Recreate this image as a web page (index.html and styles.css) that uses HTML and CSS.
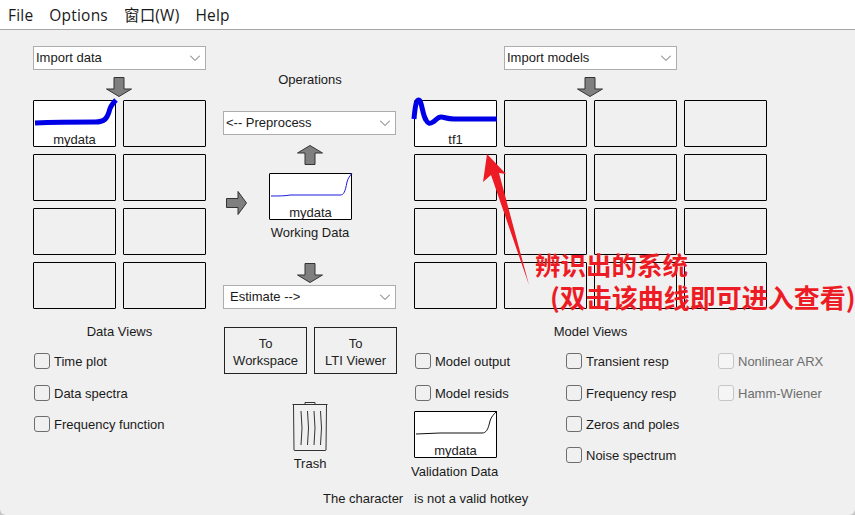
FILE: index.html
```html
<!DOCTYPE html>
<html lang="en">
<head>
  <meta charset="UTF-8">
  <title>System Identification</title>
  <link rel="stylesheet" href="styles.css">
</head>
<body>
  <div class="window">
    <div class="menubar">
      <span>File</span>
      <span>Options</span>
      <span>窗口(W)</span>
      <span>Help</span>
    </div>

    <div class="main">
      <!-- data side -->
      <div class="col-data">
        <div class="select"><span>Import data</span><svg class="chev" viewBox="0 0 10 6"><path d="M0 0.5 L5 5.5 L10 0.5"/></svg></div>
        <svg class="arrow arrow-in" viewBox="0 0 26 20"><path d="M8 0.5 H18 V12 H25.5 L13 19.5 L0.5 12 H8 Z"/></svg>
        <div class="tiles tiles-2">
          <div class="tile filled">
            <svg class="curve" viewBox="0 0 83 47"><path class="thick" d="M2 23 C25 22 40 22 62 22 C72 22 74 18 76 12 C77 6 80 3 83 0"/></svg>
            <span>mydata</span>
          </div>
          <div class="tile"></div>
          <div class="tile"></div><div class="tile"></div>
          <div class="tile"></div><div class="tile"></div>
          <div class="tile"></div><div class="tile"></div>
        </div>
        <div class="view-title">Data Views</div>
        <div class="checks">
          <label class="check"><input type="checkbox">Time plot</label>
          <label class="check"><input type="checkbox">Data spectra</label>
          <label class="check"><input type="checkbox">Frequency function</label>
        </div>
      </div>

      <!-- operations -->
      <div class="col-ops">
        <div class="ops-title">Operations</div>
        <div class="select"><span>&lt;-- Preprocess</span><svg class="chev" viewBox="0 0 10 6"><path d="M0 0.5 L5 5.5 L10 0.5"/></svg></div>
        <svg class="arrow arrow-up" viewBox="0 0 26 20"><path d="M8 19.5 H18 V8 H25.5 L13 0.5 L0.5 8 H8 Z"/></svg>
        <div class="work-row">
          <svg class="arrow arrow-right" viewBox="0 0 21 24"><path d="M0.5 7.5 H12 V0.5 L20.5 12 L12 23.5 V16.5 H0.5 Z"/></svg>
          <div class="tile filled">
            <svg class="curve" viewBox="0 0 83 47"><path class="thin" d="M2 23 C10 23 16 23 21 22 L71 22 C75 22 76 19 78 9 C79 5 81 3 83 0"/></svg>
            <span>mydata</span>
          </div>
        </div>
        <div class="work-label">Working Data</div>
        <svg class="arrow arrow-down" viewBox="0 0 26 20"><path d="M8 0.5 H18 V12 H25.5 L13 19.5 L0.5 12 H8 Z"/></svg>
        <div class="select select-estimate"><span>Estimate --&gt;</span><svg class="chev" viewBox="0 0 10 6"><path d="M0 0.5 L5 5.5 L10 0.5"/></svg></div>
        <div class="buttons">
          <button>To<br>Workspace</button>
          <button>To<br>LTI Viewer</button>
        </div>
        <svg class="trash" viewBox="0 0 36 49">
          <path d="M13 2.5 V0.5 H23 V2.5"/>
          <path d="M0.5 2.5 H35.5"/>
          <path d="M1.5 2.5 L2 48 Q2 48.5 3 48.5 H33 Q34 48.5 34 48 L34.5 2.5"/>
          <path d="M9 9 Q11 26 9 43 M15.5 9 Q17.5 26 15.5 43 M22 9 Q24 26 22 43 M28.5 9 Q30.5 26 28.5 43"/>
        </svg>
        <div class="trash-label">Trash</div>
      </div>

      <!-- models -->
      <div class="col-models">
        <div class="select select-models"><span>Import models</span><svg class="chev" viewBox="0 0 10 6"><path d="M0 0.5 L5 5.5 L10 0.5"/></svg></div>
        <svg class="arrow arrow-in" viewBox="0 0 26 20"><path d="M8 0.5 H18 V12 H25.5 L13 19.5 L0.5 12 H8 Z"/></svg>
        <div class="tiles tiles-4">
          <div class="tile filled">
            <svg class="curve" viewBox="0 0 83 47"><path class="thick" d="M0 19 C1 8 2 0 4.5 0 C8 0 8 14 12 20 C14 24 16 24 19 22 C22 20 24 17 27 17 C31 17 32 19 40 19 L83 19"/></svg>
            <span>tf1</span>
          </div>
          <div class="tile"></div><div class="tile"></div><div class="tile"></div>
          <div class="tile"></div><div class="tile"></div><div class="tile"></div><div class="tile"></div>
          <div class="tile"></div><div class="tile"></div><div class="tile"></div><div class="tile"></div>
          <div class="tile"></div><div class="tile"></div><div class="tile"></div><div class="tile"></div>
        </div>
        <div class="view-title">Model Views</div>
        <div class="model-views">
          <div class="model-col-a">
            <div class="checks">
              <label class="check"><input type="checkbox">Model output</label>
              <label class="check"><input type="checkbox">Model resids</label>
            </div>
            <div class="tile filled val-tile">
              <svg class="curve" viewBox="0 0 83 47"><path class="thin dark" d="M2 23 C10 23 18 22 26 22 L68 22 C72 22 74 19 76 10 C77 6 80 3 83 0"/></svg>
              <span>mydata</span>
            </div>
            <div class="val-label">Validation Data</div>
          </div>
          <div class="checks model-col-b">
            <label class="check"><input type="checkbox">Transient resp</label>
            <label class="check"><input type="checkbox">Frequency resp</label>
            <label class="check"><input type="checkbox">Zeros and poles</label>
            <label class="check"><input type="checkbox">Noise spectrum</label>
          </div>
          <div class="checks model-col-c">
            <label class="check off"><input type="checkbox" disabled>Nonlinear ARX</label>
            <label class="check off"><input type="checkbox" disabled>Hamm-Wiener</label>
          </div>
        </div>
      </div>
    </div>

    <div class="status">The character   is not a valid hotkey</div>

    <!-- annotation drawn on top of the screenshot -->
    <svg class="note-arrow" viewBox="0 0 855 515"><path d="M487 154 L506 174 L499 173 L529 285 L491 175 L483 182 Z"/></svg>
    <div class="note">
      <div class="note-first">辨识出的系统</div>
      <div class="note-second">(双击该曲线即可进入查看)</div>
    </div>
  </div>
</body>
</html>
```

FILE: styles.css
```css
html, body {
  margin: 0;
  height: 100%;
  background: #c4c4c4;
}
.window {
  position: relative;
  width: 855px;
  height: 515px;
  overflow: hidden;
  background: #f0f0f0;
  border-radius: 0 0 6px 6px;
  font-family: "Liberation Sans", Arial, "Noto Sans CJK SC", sans-serif;
  font-size: 13px;
  line-height: 16px;
  color: #1a1a1a;
}
.menubar {
  display: flex;
  gap: 16px;
  height: 29px;
  padding-left: 8px;
  align-items: center;
  background: #fff;
  border-bottom: 1px solid #a6a6a6;
  font-family: "Open Sans", "Noto Sans CJK SC", sans-serif;
  font-size: 15.5px;
  letter-spacing: 0.2px;
}
.main {
  display: flex;
  height: 460px;
  padding-left: 33px;
}
.col-data {
  width: 173px;
  margin-right: 17px;
}
.col-ops {
  width: 174px;
  margin-right: 17px;
  display: flex;
  flex-direction: column;
  align-items: center;
}
.col-models {
  width: 353px;
}

.select {
  display: flex;
  align-items: center;
  justify-content: space-between;
  box-sizing: border-box;
  width: 173px;
  height: 24px;
  margin-top: 16px;
  padding: 0 5px 0 2px;
  background: #fff;
  border: 1px solid #adadad;
}
.col-ops .select {
  margin-top: 0;
  align-self: flex-start;
  padding-left: 2px;
}
.col-ops .select-estimate {
  padding-left: 6px;
}
.select-models {
  margin-left: 90px;
}
.chev {
  width: 10px;
  height: 6px;
  fill: none;
  stroke: #666;
  stroke-width: 1;
}

.arrow {
  display: block;
  fill: #7f7f7f;
  stroke: #333;
  stroke-width: 1;
}
.arrow-in {
  width: 26px;
  height: 20px;
  margin: 7px 0 3px;
}
.col-data .arrow-in {
  margin-left: 73px;
}
.col-models .arrow-in {
  margin-left: 163px;
}
.arrow-up, .arrow-down {
  width: 26px;
  height: 20px;
}
.arrow-up {
  margin: 10px 0 8px;
}
.arrow-down {
  margin: 22px 0 2px;
}
.arrow-right {
  width: 21px;
  height: 24px;
  margin: 18px 22px 0 3px;
}

.tiles {
  display: grid;
  grid-auto-rows: 47px;
  gap: 7px;
}
.tiles-2 {
  grid-template-columns: repeat(2, 83px);
}
.tiles-4 {
  grid-template-columns: repeat(4, 83px);
}
.tile {
  position: relative;
  box-sizing: border-box;
  width: 83px;
  height: 47px;
  border: 1px solid #000;
  border-radius: 1px;
}
.filled {
  display: flex;
  flex-direction: column;
  justify-content: flex-end;
  align-items: center;
  background: #fff;
  line-height: 13px;
  color: #222;
}
.curve {
  position: absolute;
  left: -1px;
  top: -1px;
  width: 83px;
  height: 47px;
  overflow: visible;
  fill: none;
}
.thick {
  stroke: #0000e6;
  stroke-width: 5;
}
.thin {
  stroke: #1a1ae0;
  stroke-width: 1;
}
.thin.dark {
  stroke: #111;
}

.view-title {
  margin-top: 15px;
  text-align: center;
}
.checks {
  display: flex;
  flex-direction: column;
  gap: 15px;
  margin-top: 13px;
}
.check {
  display: flex;
  align-items: flex-start;
  gap: 4px;
  height: 16px;
  line-height: 18px;
  white-space: nowrap;
}
.check:first-child {
  margin-bottom: 1px;
}
.check input {
  appearance: none;
  box-sizing: border-box;
  width: 16px;
  height: 16px;
  margin: 0;
  flex: none;
  border: 1px solid #6e6e6e;
  border-radius: 3px;
  background: #f0f0f0;
}
.col-data .check, .model-col-a .check {
  margin-left: 1px;
}
.check.off {
  color: #6d6d6d;
}
.check.off input {
  border-color: #c6c6c6;
  background: #f5f5f5;
}

.ops-title {
  margin: 42px 0 23px;
}
.work-row {
  display: flex;
  align-self: flex-start;
}
.work-label {
  margin-top: 5px;
}
.buttons {
  display: flex;
  gap: 7px;
  margin: 18px 0 0 1px;
}
.buttons button {
  box-sizing: border-box;
  width: 83px;
  height: 47px;
  padding: 2px 0 0;
  background: transparent;
  border: 1px solid #222;
  font: inherit;
  line-height: 17px;
  color: #222;
}
.trash {
  width: 36px;
  height: 49px;
  margin-top: 28px;
  fill: none;
  stroke: #333;
  stroke-width: 1;
}
.trash-label {
  margin-top: 5px;
}

.model-views {
  display: flex;
}
.model-col-a, .model-col-b {
  flex: none;
  width: 152px;
}
.model-col-c {
  flex: none;
}
.val-tile {
  margin-top: 10px;
}
.val-label {
  margin: 6px 0 0 -3px;
}

.status {
  padding: 1px 0 0 323px;
  white-space: pre;
}

.note-arrow {
  position: absolute;
  left: 0;
  top: 0;
  width: 855px;
  height: 515px;
  fill: #ed1c24;
}
.note {
  position: absolute;
  left: 535px;
  top: 247px;
  font-family: "Noto Sans CJK SC", sans-serif;
  font-weight: 700;
  line-height: 33px;
  color: #ed1c24;
  white-space: nowrap;
}
.note-first {
  font-size: 25.5px;
}
.note-second {
  margin-left: 15px;
  font-size: 26px;
}
```
